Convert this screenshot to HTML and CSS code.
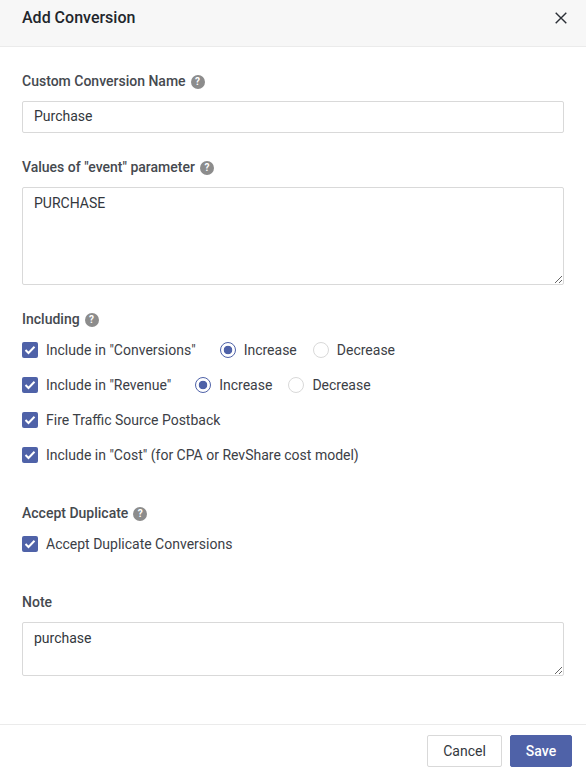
FILE: index.html
```html
<!DOCTYPE html>
<html lang="en">
<head>
    <meta charset="UTF-8">
    <meta name="viewport" content="width=device-width, initial-scale=1.0">
    <title>Add Conversion</title>
    <link rel="stylesheet" href="styles.css">
</head>
<body>
    <div class="modal">
        <div class="modal-header">
            <h1 class="modal-title">Add Conversion</h1>
            <svg class="close-icon" width="12" height="12" viewBox="0 0 12 12"><path d="M.7.7l10.6 10.6M11.3.7L.7 11.3" fill="none" stroke="#2b2f36" stroke-width="1.4"/></svg>
        </div>
        <div class="modal-body">
            <div class="form-group name-group">
                <label class="form-label">Custom Conversion Name <span class="help">?</span></label>
                <input type="text" class="form-control" value="Purchase">
            </div>
            <div class="form-group values-group">
                <label class="form-label">Values of "event" parameter <span class="help">?</span></label>
                <textarea class="form-control values-area">PURCHASE</textarea>
            </div>
            <div class="form-group including-group">
                <label class="form-label">Including <span class="help">?</span></label>
                <div class="check-list">
                    <div class="check-row">
                        <span class="checkbox"><svg width="12" height="10" viewBox="0 0 12 10"><path d="M1.5 5l3 3 6-6.2" fill="none" stroke="#fff" stroke-width="2"/></svg></span>
                        <span class="check-text">Include in "Conversions"</span>
                        <span class="radio-set">
                            <span class="radio radio-on"></span><span class="check-text">Increase</span>
                            <span class="radio"></span><span class="check-text">Decrease</span>
                        </span>
                    </div>
                    <div class="check-row">
                        <span class="checkbox"><svg width="12" height="10" viewBox="0 0 12 10"><path d="M1.5 5l3 3 6-6.2" fill="none" stroke="#fff" stroke-width="2"/></svg></span>
                        <span class="check-text">Include in "Revenue"</span>
                        <span class="radio-set">
                            <span class="radio radio-on"></span><span class="check-text">Increase</span>
                            <span class="radio"></span><span class="check-text">Decrease</span>
                        </span>
                    </div>
                    <div class="check-row">
                        <span class="checkbox"><svg width="12" height="10" viewBox="0 0 12 10"><path d="M1.5 5l3 3 6-6.2" fill="none" stroke="#fff" stroke-width="2"/></svg></span>
                        <span class="check-text">Fire Traffic Source Postback</span>
                    </div>
                    <div class="check-row">
                        <span class="checkbox"><svg width="12" height="10" viewBox="0 0 12 10"><path d="M1.5 5l3 3 6-6.2" fill="none" stroke="#fff" stroke-width="2"/></svg></span>
                        <span class="check-text">Include in "Cost" (for CPA or RevShare cost model)</span>
                    </div>
                </div>
            </div>
            <div class="form-group duplicate-group">
                <label class="form-label">Accept Duplicate <span class="help">?</span></label>
                <div class="check-list">
                    <div class="check-row">
                        <span class="checkbox"><svg width="12" height="10" viewBox="0 0 12 10"><path d="M1.5 5l3 3 6-6.2" fill="none" stroke="#fff" stroke-width="2"/></svg></span>
                        <span class="check-text">Accept Duplicate Conversions</span>
                    </div>
                </div>
            </div>
            <div class="form-group note-group">
                <label class="form-label">Note</label>
                <textarea class="form-control note-area">purchase</textarea>
            </div>
        </div>
        <div class="modal-footer">
            <button class="button button-default">Cancel</button>
            <button class="button button-primary">Save</button>
        </div>
    </div>
</body>
</html>
```
FILE: styles.css
```css
* {
    box-sizing: border-box;
}
body {
    margin: 0;
    background-color: #fff;
    font-family: Roboto, "Liberation Sans", sans-serif;
    font-size: 14px;
    color: #33373d;
}
.modal {
    width: 586px;
    height: 774px;
    overflow: hidden;
}
.modal-header {
    display: flex;
    align-items: center;
    justify-content: space-between;
    height: 47px;
    padding: 0 19px 10px 22px;
    background-color: #f7f7f7;
    border-bottom: 1px solid #ebebeb;
}
.modal-title {
    margin: 0;
    font-size: 16px;
    font-weight: 500;
    line-height: 20px;
    color: #22262c;
}
.modal-body {
    height: 677px;
    padding: 0 22px;
}
.form-label {
    display: flex;
    align-items: center;
    gap: 5px;
    height: 20px;
    font-weight: 500;
    color: #45494f;
}
.help {
    display: inline-block;
    width: 14px;
    height: 14px;
    margin-top: 2px;
    border-radius: 50%;
    background-color: #8c8c8c;
    color: #fff;
    font-size: 10px;
    font-weight: 700;
    line-height: 14px;
    text-align: center;
}
.form-group .form-label {
    margin-bottom: 10px;
}
.form-control {
    display: block;
    width: 100%;
    padding: 6px 11px;
    border: 1px solid #d9d9d9;
    border-radius: 2px;
    font-family: inherit;
    font-size: 14px;
    line-height: 18px;
    color: #33373d;
    outline: none;
}
input.form-control {
    height: 32px;
    padding-top: 4px;
    padding-bottom: 6px;
}
.values-area {
    height: 98px;
}
.note-area {
    height: 54px;
}
.name-group {
    padding-top: 24px;
}
.values-group {
    padding-top: 24px;
}
.including-group {
    padding-top: 24px;
}
.duplicate-group {
    padding-top: 40px;
}
.note-group {
    padding-top: 40px;
}
.including-group .form-label,
.duplicate-group .form-label {
    margin-bottom: 13px;
}
.check-list {
    display: flex;
    flex-direction: column;
    gap: 19px;
}
.check-row {
    display: flex;
    align-items: center;
    height: 16px;
}
.checkbox {
    display: flex;
    align-items: center;
    justify-content: center;
    width: 16px;
    height: 16px;
    margin-right: 8px;
    border-radius: 2px;
    background-color: #4f62a8;
}
.check-text {
    color: #3c4046;
}
.radio-set {
    display: flex;
    align-items: center;
    margin-left: 24px;
}
.radio {
    width: 16px;
    height: 16px;
    margin-right: 8px;
    margin-left: 16px;
    border: 1px solid #d9d9d9;
    border-radius: 50%;
}
.radio-on {
    margin-left: 0;
    border-color: #4f62a8;
    background: radial-gradient(circle, #4f62a8 0, #4f62a8 4px, #fff 4.6px);
}
.modal-footer {
    display: flex;
    justify-content: flex-end;
    gap: 8px;
    height: 50px;
    padding: 10px 14px 0 0;
    border-top: 1px solid #ebebeb;
}
.button {
    height: 32px;
    border-radius: 2px;
    font-family: inherit;
    font-size: 14px;
}
.button-default {
    width: 75px;
    background-color: #fff;
    border: 1px solid #d9d9d9;
    color: #33373d;
}
.button-primary {
    width: 62px;
    background-color: #4f62a8;
    border: 1px solid #4f62a8;
    color: #fff;
    font-weight: 500;
}
```
